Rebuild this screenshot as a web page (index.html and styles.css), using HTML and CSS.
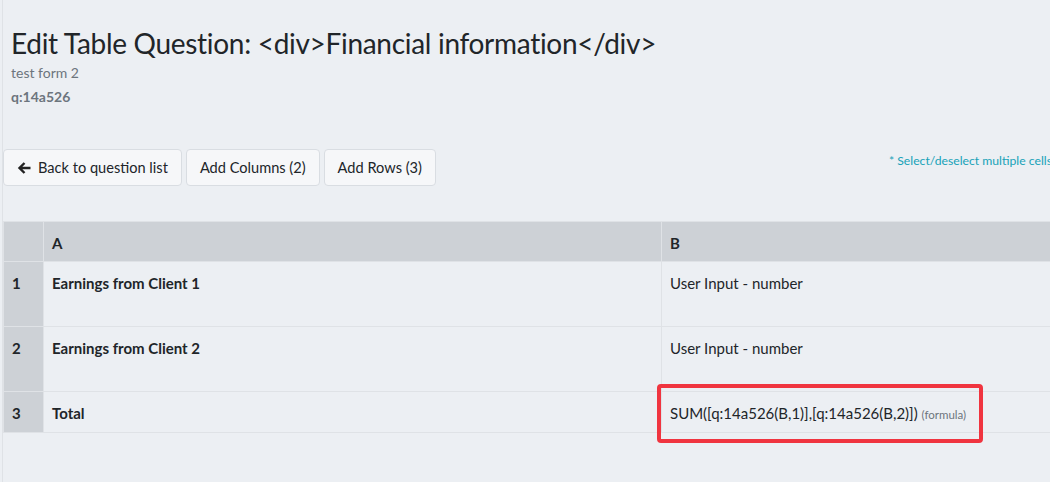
FILE: index.html
```html
<!DOCTYPE html>
<html>
<head>
<meta charset="utf-8">
<link rel="stylesheet" href="styles.css">
</head>
<body>
<div class="page">
  <header class="head">
    <h1 class="title">Edit Table Question: &lt;div&gt;Financial information&lt;/div&gt;</h1>
    <div class="form-name">test form 2</div>
    <div class="qid">q:14a526</div>
  </header>
  <div class="toolbar">
    <div class="btns">
      <button class="btn"><svg class="arrow" viewBox="0 0 14 14" width="14" height="14"><path d="M13.5 7H2.5M7.5 2 2.5 7l5 5" fill="none" stroke="#222" stroke-width="2.4" stroke-linejoin="miter"/></svg>Back to question list</button>
      <button class="btn">Add Columns (2)</button>
      <button class="btn">Add Rows (3)</button>
    </div>
    <div class="hint">* Select/deselect multiple cells</div>
  </div>
  <div class="table-wrap">
    <table class="grid">
      <thead>
        <tr><th class="num"></th><th class="colA">A</th><th class="colB">B</th></tr>
      </thead>
      <tbody>
        <tr><td class="num">1</td><td class="label">Earnings from Client 1</td><td>User Input - number</td></tr>
        <tr><td class="num">2</td><td class="label">Earnings from Client 2</td><td>User Input - number</td></tr>
        <tr class="last"><td class="num">3</td><td class="label">Total</td><td class="formula-cell"><span class="formula">SUM([q:14a526(B,1)],[q:14a526(B,2)]) <small>(formula)</small></span></td></tr>
      </tbody>
    </table>
  </div>
</div>
</body>
</html>
```
FILE: styles.css
```css
html, body {
  margin: 0;
  padding: 0;
  background: #eceff3;
  font-family: "Source Sans Pro", Lato, "Liberation Sans", sans-serif;
  color: #212529;
}
.page {
  width: 1047px;
  height: 482px;
  border-left: 1px solid #dfe2e6;
  margin-left: 2px;
  overflow: hidden;
}
.head {
  padding: 26px 0 0 8px;
}
.title {
  margin: 0;
  font-weight: 400;
  font-size: 28px;
  line-height: 34px;
  letter-spacing: -0.3px;
}
.form-name {
  margin-top: 3px;
  font-size: 14px;
  color: #6c757d;
  line-height: 20px;
}
.qid {
  margin-top: 4px;
  font-size: 14px;
  font-weight: 700;
  color: #6c757d;
  line-height: 20px;
}
.toolbar {
  margin-top: 42px;
  display: flex;
  align-items: flex-start;
}
.btns {
  display: flex;
  gap: 4px;
  flex: none;
}
.btn {
  font-family: inherit;
  font-size: 14.6px;
  color: #212529;
  background: #f6f7f9;
  border: 1px solid #d9dde2;
  border-radius: 4px;
  height: 37px;
  padding: 0 13px;
  display: flex;
  align-items: center;
  gap: 7px;
}
.hint {
  margin-left: 453px;
  margin-top: 4px;
  font-size: 12.2px;
  color: #17a2b8;
  white-space: nowrap;
  flex: none;
}
.table-wrap {
  margin-top: 35px;
}
.grid {
  border-collapse: collapse;
  width: 1200px;
  font-size: 15px;
}
.grid th, .grid td {
  border: 1px solid #dfe2e6;
  text-align: left;
  vertical-align: top;
  padding: 12px 8px 0 8px;
}
.grid thead th {
  background: #cdd1d6;
  font-weight: 700;
  height: 27px;
  padding-top: 12px;
}
.grid .num {
  background: #cdd1d6;
  font-weight: 700;
  width: 23px;
}
.grid .colA { width: 601px; }
.grid tbody td { height: 52px; }
.grid tbody tr.last td { height: 28px; }
.label { font-weight: 700; }
.formula-cell { position: relative; }
.formula {
  white-space: nowrap;
}
.formula::after {
  content: "";
  position: absolute;
  left: -5px;
  top: -8px;
  width: 318px;
  height: 51px;
  border: 4px solid #f0343f;
  border-radius: 4px;
}
.formula small {
  font-size: 11.5px;
  color: #6c757d;
}
```
